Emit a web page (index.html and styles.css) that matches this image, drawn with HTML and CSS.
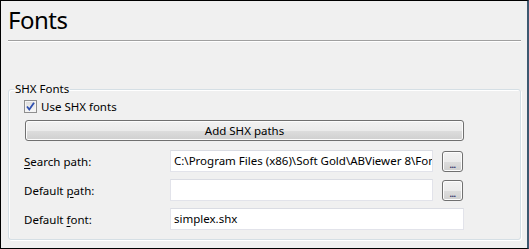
FILE: index.html
```html
<!DOCTYPE html>
<html lang="en">
<head>
  <meta charset="UTF-8">
  <title>Fonts</title>
  <link rel="stylesheet" href="styles.css">
</head>
<body>
  <div class="panel">
    <h1 class="title">Fonts</h1>
    <div class="rule"></div>

    <fieldset class="group">
      <legend>SHX Fonts</legend>

      <label class="check">
        <span class="check-box">
          <svg width="11" height="11" viewBox="0 0 11 11">
            <path d="M2 5.5 L4.3 8.5 L9 1.8" fill="none" stroke="#2d4fb0" stroke-width="1.8"/>
          </svg>
        </span>
        Use SHX fonts
      </label>

      <button class="btn btn-wide">Add SHX paths</button>

      <div class="row">
        <label class="row-label"><u>S</u>earch path:</label>
        <div class="field">C:\Program Files (x86)\Soft Gold\ABViewer 8\Fonts</div>
        <button class="btn btn-dots"><span class="dots">...</span></button>
      </div>
      <div class="row">
        <label class="row-label">Default <u>p</u>ath:</label>
        <div class="field"></div>
        <button class="btn btn-dots"><span class="dots">...</span></button>
      </div>
      <div class="row">
        <label class="row-label">Default <u>f</u>ont:</label>
        <div class="field field-long">simplex.shx</div>
      </div>
    </fieldset>
  </div>
</body>
</html>
```

FILE: styles.css
```css
* {
  box-sizing: border-box;
}

body {
  margin: 0;
  font-family: "Noto Sans", "DejaVu Sans", sans-serif;
  font-size: 11.5px;
  color: #000;
}

.panel {
  width: 529px;
  height: 249px;
  background: #f0f0f0;
  border-top: 1px solid #000;
  border-left: 1px solid #000;
  border-bottom: 1px solid #000;
  border-right: 2px solid #3d5870;
  overflow: hidden;
}

.title {
  margin: 0;
  padding-left: 7px;
  height: 39px;
  font-size: 24px;
  font-weight: normal;
  line-height: 38px;
  letter-spacing: -0.5px;
}

.rule {
  margin: 0 6px 0 7px;
  border-top: 1px solid #a0a0a0;
  border-bottom: 1px solid #fff;
}

.group {
  margin: 40px 6px 0 7px;
  padding: 0 0 0 15px;
  height: 158px;
  border: 1px solid #d5dfe5;
  border-radius: 3px;
  box-shadow: inset 1px 1px 0 #fff, 1px 1px 0 #fff;
}

.group legend {
  padding: 0 1px;
  margin-left: -10px;
  line-height: 14px;
}

.check {
  display: flex;
  align-items: center;
  gap: 4px;
  height: 15px;
  margin-top: 3px;
}

.check-box {
  width: 13px;
  height: 13px;
  border: 1px solid #8f8f8f;
  background: linear-gradient(#dcdcdc, #f8f8f8);
  box-shadow: inset 0 0 0 1px #f4f4f4;
  display: flex;
  align-items: center;
  justify-content: center;
}

.btn {
  font-family: inherit;
  font-size: 11.5px;
  color: #000;
  border: 1px solid #707070;
  border-radius: 3px;
  background: linear-gradient(#f2f2f2 0%, #ebebeb 50%, #dddddd 51%, #cfcfcf 100%);
  box-shadow: inset 0 0 0 1px #fcfcfc;
  padding: 0;
}

.btn-wide {
  display: block;
  width: 439px;
  height: 21px;
  margin: 6px 0 0 1px;
}

.row {
  display: flex;
  align-items: center;
  height: 22px;
  margin-top: 7px;
}

.btn-wide + .row {
  margin-top: 9px;
}

.row-label {
  width: 146px;
}

.row-label u {
  text-decoration-thickness: 1px;
  text-underline-offset: 2px;
}

.field {
  width: 263px;
  height: 22px;
  background: #fff;
  border: 1px solid #e2e3ea;
  border-top-color: #dadce3;
  padding: 0 3px;
  line-height: 20px;
  white-space: nowrap;
  overflow: hidden;
}

.field-long {
  width: 294px;
}

.btn-dots {
  width: 21px;
  height: 21px;
  margin-left: 9px;
}

.dots {
  font-size: 9px;
  font-weight: bold;
  color: #33336a;
  letter-spacing: -0.5px;
  position: relative;
  top: 2px;
}
```
